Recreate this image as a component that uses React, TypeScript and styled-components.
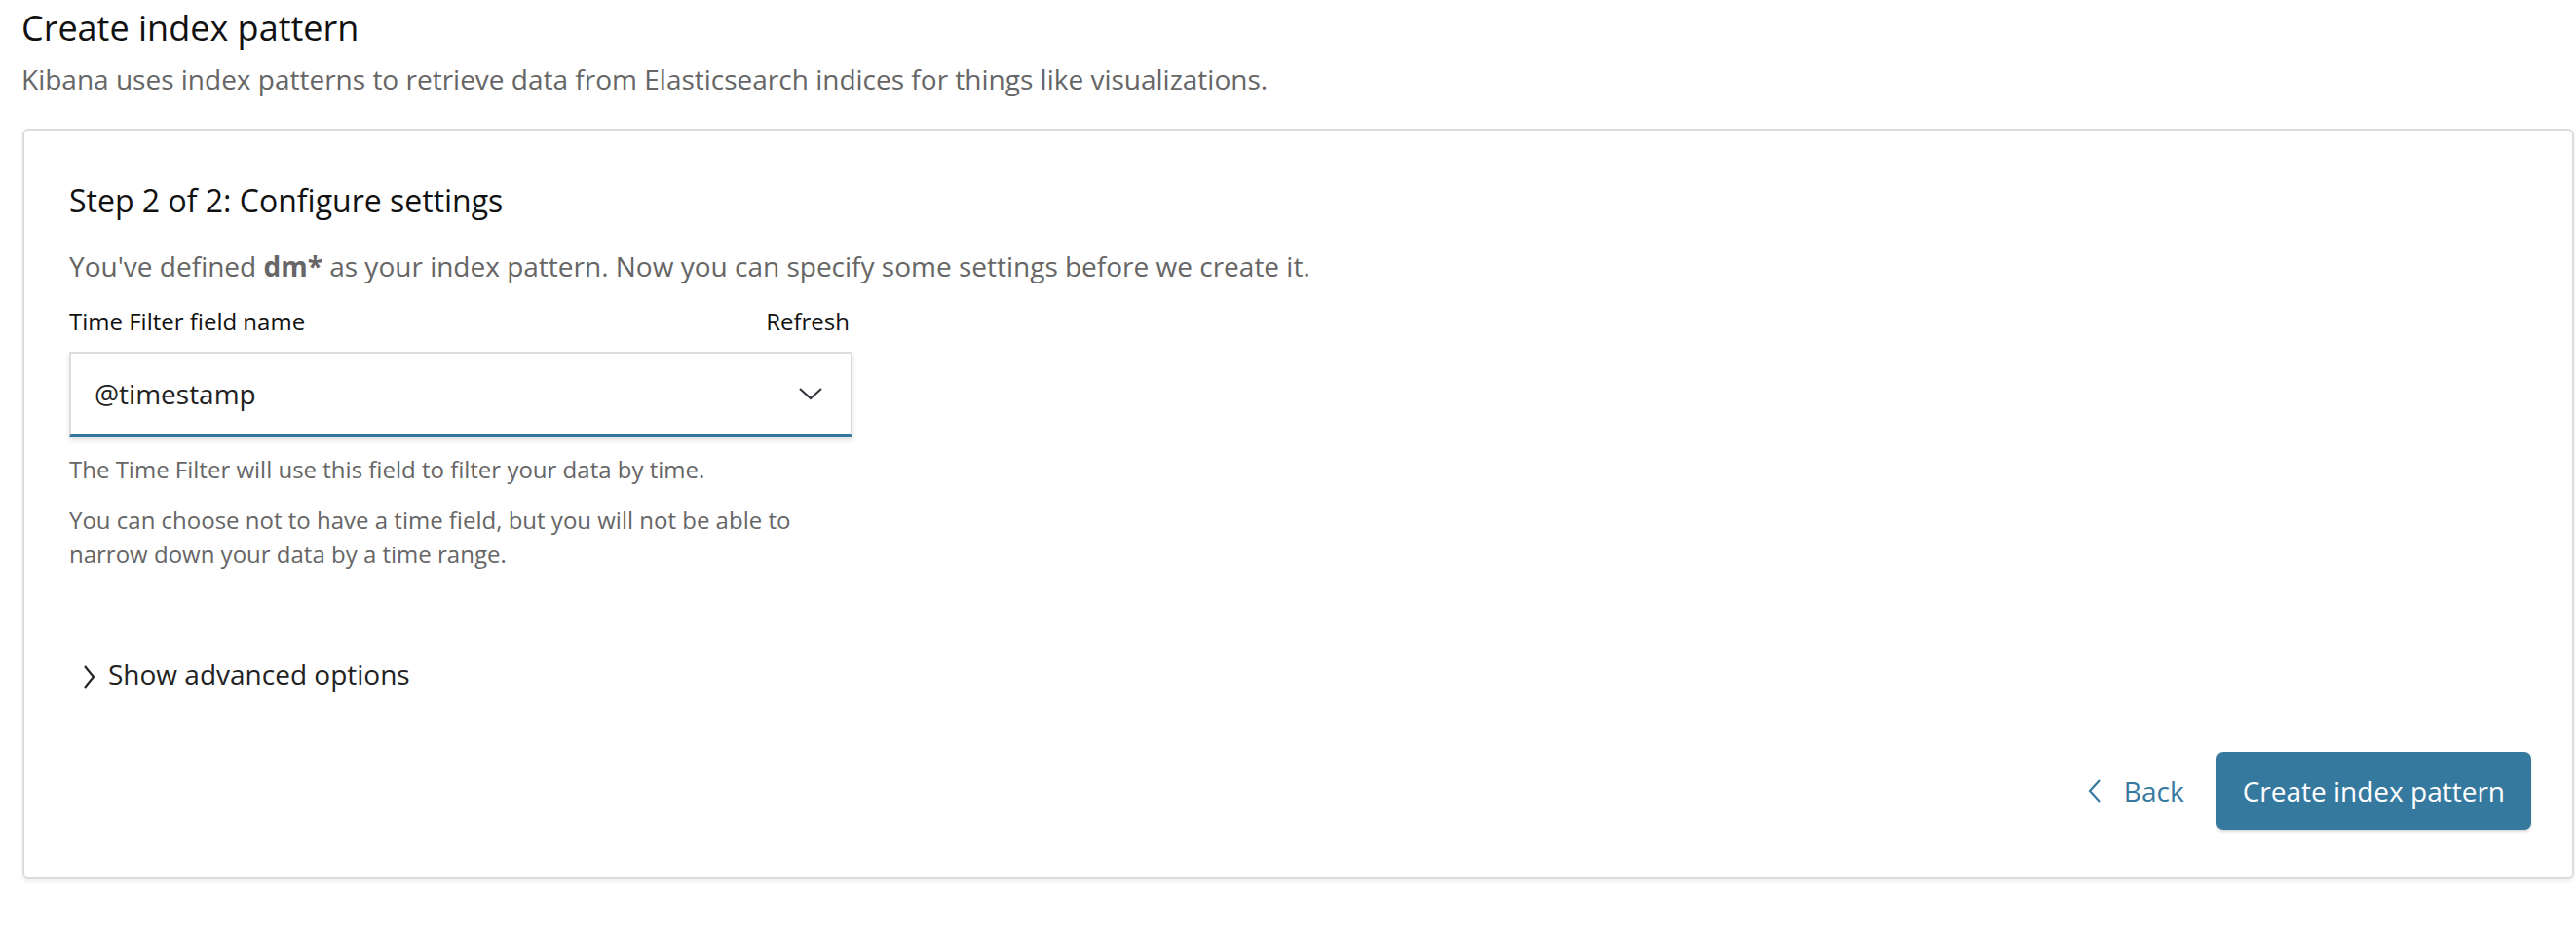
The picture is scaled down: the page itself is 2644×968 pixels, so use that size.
import React from 'react';
import styled, { createGlobalStyle } from 'styled-components';

const GlobalStyle = createGlobalStyle`
  html, body {
    margin: 0;
    padding: 0;
    background: #ffffff;
  }
  body {
    font-family: "Open Sans", "Noto Sans", sans-serif;
    -webkit-font-smoothing: antialiased;
  }
`;

const Page = styled.div`
  padding: 8px 2px 68px 22px;
`;

const PageTitle = styled.h1`
  margin: 0;
  font-size: 36px;
  line-height: 42px;
  font-weight: 400;
  color: #111;
`;

const PageSubtitle = styled.p`
  margin: 13px 0 0;
  font-size: 28px;
  line-height: 36px;
  color: #666;
`;

const Card = styled.section`
  margin-top: 33px;
  margin-left: 1px;
  border: 2px solid #dcdcdc;
  border-radius: 6px;
  box-shadow: 0 3px 4px rgba(0, 0, 0, 0.06);
  background: #fff;
  padding: 53px 42px 48px 46px;
`;

const StepTitle = styled.h2`
  margin: 0;
  font-size: 32px;
  line-height: 38px;
  font-weight: 400;
  color: #111;
`;

const Lead = styled.p`
  margin: 28px 0 0;
  font-size: 28px;
  line-height: 40px;
  color: #666;

  strong {
    font-weight: 700;
  }
`;

const Field = styled.div`
  width: 804px;
  margin-top: 22px;
`;

const LabelRow = styled.div`
  display: flex;
  justify-content: space-between;
  align-items: baseline;
  font-size: 24px;
  line-height: 30px;
  color: #111;
  padding-right: 3px;
`;

const SelectBox = styled.div`
  margin-top: 16px;
  height: 88px;
  box-sizing: border-box;
  display: flex;
  align-items: center;
  justify-content: space-between;
  padding: 0 28px 0 24px;
  border: 2px solid #dddddd;
  border-bottom: 4px solid #35779f;
  box-shadow: 0 3px 5px rgba(0, 0, 0, 0.12);
  font-size: 28px;
  color: #222;
`;

const Help = styled.p`
  margin: 15px 0 0;
  font-size: 24px;
  line-height: 35px;
  color: #666;

  & + & {
    margin-top: 17px;
  }
`;

const Toggle = styled.button`
  margin-top: 86px;
  display: flex;
  align-items: center;
  gap: 12px;
  padding: 0 0 0 14px;
  border: 0;
  background: none;
  font-family: inherit;
  font-size: 28px;
  line-height: 40px;
  color: #222;
  cursor: pointer;

  svg {
    margin-top: 6px;
  }
`;

const Footer = styled.div`
  margin-top: 60px;
  display: flex;
  justify-content: flex-end;
  align-items: center;
  gap: 33px;
`;

const LinkButton = styled.button`
  display: flex;
  align-items: center;
  gap: 22px;
  border: 0;
  background: none;
  padding: 0;
  font-family: inherit;
  font-size: 28px;
  color: #36799f;
  cursor: pointer;
`;

const PrimaryButton = styled.button`
  height: 80px;
  padding: 0 27px;
  border: 0;
  border-radius: 7px;
  background: #36799f;
  color: #fff;
  font-family: inherit;
  font-size: 28px;
  box-shadow: 0 2px 3px rgba(0, 0, 0, 0.15);
  cursor: pointer;
`;

const Chevron = ({ dir, color }: { dir: 'down' | 'right' | 'left'; color: string }) => {
  if (dir === 'down') {
    return (
      <svg width="26" height="16" viewBox="0 0 26 16">
        <path d="M2 3 L13 13 L24 3" fill="none" stroke={color} strokeWidth="2.2" />
      </svg>
    );
  }
  if (dir === 'right') {
    return (
      <svg width="14" height="26" viewBox="0 0 14 26">
        <path d="M2 2 L11 13 L2 24" fill="none" stroke={color} strokeWidth="2.2" />
      </svg>
    );
  }
  return (
    <svg width="16" height="26" viewBox="0 0 16 26">
      <path d="M13 2 L3 13 L13 24" fill="none" stroke={color} strokeWidth="2.2" />
    </svg>
  );
};

export default function App() {
  return (
    <Page>
      <GlobalStyle />
      <PageTitle>Create index pattern</PageTitle>
      <PageSubtitle>
        Kibana uses index patterns to retrieve data from Elasticsearch indices for things like visualizations.
      </PageSubtitle>
      <Card>
        <StepTitle>Step 2 of 2: Configure settings</StepTitle>
        <Lead>
          You've defined <strong>dm*</strong> as your index pattern. Now you can specify some settings before we
          create it.
        </Lead>
        <Field>
          <LabelRow>
            <span>Time Filter field name</span>
            <span>Refresh</span>
          </LabelRow>
          <SelectBox>
            <span>@timestamp</span>
            <Chevron dir="down" color="#343741" />
          </SelectBox>
          <Help>The Time Filter will use this field to filter your data by time.</Help>
          <Help>
            You can choose not to have a time field, but you will not be able to narrow down your data by a time
            range.
          </Help>
        </Field>
        <Toggle>
          <Chevron dir="right" color="#222" />
          Show advanced options
        </Toggle>
        <Footer>
          <LinkButton>
            <Chevron dir="left" color="#36799f" />
            Back
          </LinkButton>
          <PrimaryButton>Create index pattern</PrimaryButton>
        </Footer>
      </Card>
    </Page>
  );
}
